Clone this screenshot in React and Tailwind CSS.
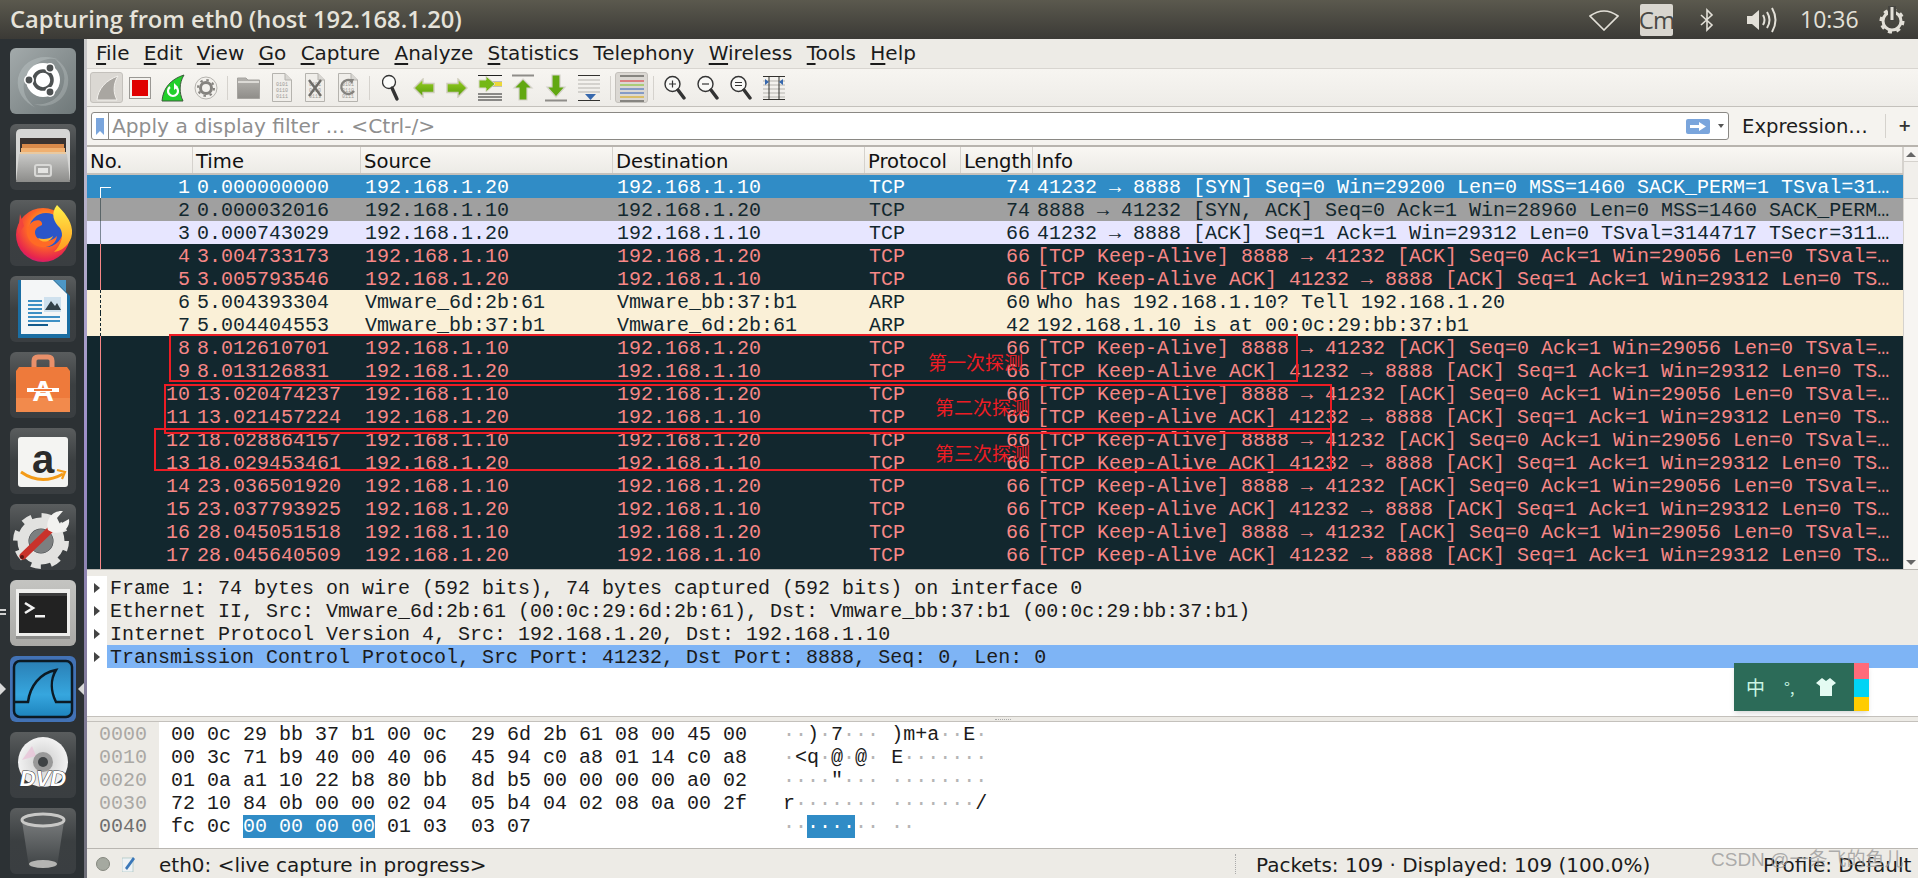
import React from 'react';

const keepA = '[TCP Keep-Alive] 8888 → 41232 [ACK] Seq=0 Ack=1 Win=29056 Len=0 TSval=…';
const keepB = '[TCP Keep-Alive ACK] 41232 → 8888 [ACK] Seq=1 Ack=1 Win=29312 Len=0 TS…';
const ip10 = '192.168.1.10';
const ip20 = '192.168.1.20';

const packets = [
  ['sel', 1, '0.000000000', ip20, ip10, 'TCP', 74, '41232 → 8888 [SYN] Seq=0 Win=29200 Len=0 MSS=1460 SACK_PERM=1 TSval=31…'],
  ['gray', 2, '0.000032016', ip10, ip20, 'TCP', 74, '8888 → 41232 [SYN, ACK] Seq=0 Ack=1 Win=28960 Len=0 MSS=1460 SACK_PERM…'],
  ['tcp', 3, '0.000743029', ip20, ip10, 'TCP', 66, '41232 → 8888 [ACK] Seq=1 Ack=1 Win=29312 Len=0 TSval=3144717 TSecr=311…'],
  ['bad', 4, '3.004733173', ip10, ip20, 'TCP', 66, keepA],
  ['bad', 5, '3.005793546', ip20, ip10, 'TCP', 66, keepB],
  ['arp', 6, '5.004393304', 'Vmware_6d:2b:61', 'Vmware_bb:37:b1', 'ARP', 60, 'Who has 192.168.1.10? Tell 192.168.1.20'],
  ['arp', 7, '5.004404553', 'Vmware_bb:37:b1', 'Vmware_6d:2b:61', 'ARP', 42, '192.168.1.10 is at 00:0c:29:bb:37:b1'],
  ['bad', 8, '8.012610701', ip10, ip20, 'TCP', 66, keepA],
  ['bad', 9, '8.013126831', ip20, ip10, 'TCP', 66, keepB],
  ['bad', 10, '13.020474237', ip10, ip20, 'TCP', 66, keepA],
  ['bad', 11, '13.021457224', ip20, ip10, 'TCP', 66, keepB],
  ['bad', 12, '18.028864157', ip10, ip20, 'TCP', 66, keepA],
  ['bad', 13, '18.029453461', ip20, ip10, 'TCP', 66, keepB],
  ['bad', 14, '23.036501920', ip10, ip20, 'TCP', 66, keepA],
  ['bad', 15, '23.037793925', ip20, ip10, 'TCP', 66, keepB],
  ['bad', 16, '28.045051518', ip10, ip20, 'TCP', 66, keepA],
  ['bad', 17, '28.045640509', ip20, ip10, 'TCP', 66, keepB],
  ['bad', 18, '33.053127344', ip10, ip20, 'TCP', 66, keepA],
];

const rowColors = {
  sel: 'bg-[#308cc6] text-white',
  gray: 'bg-[#a0a0a0] text-[#12272e]',
  tcp: 'bg-[#e7e6ff] text-[#12272e]',
  bad: 'bg-[#12272e] text-[#f78787]',
  arp: 'bg-[#faf0d7] text-[#12272e]',
};

const details = [
  'Frame 1: 74 bytes on wire (592 bits), 74 bytes captured (592 bits) on interface 0',
  'Ethernet II, Src: Vmware_6d:2b:61 (00:0c:29:6d:2b:61), Dst: Vmware_bb:37:b1 (00:0c:29:bb:37:b1)',
  'Internet Protocol Version 4, Src: 192.168.1.20, Dst: 192.168.1.10',
  'Transmission Control Protocol, Src Port: 41232, Dst Port: 8888, Seq: 0, Len: 0',
];

const hexRows = [
  ['0000', '00 0c 29 bb 37 b1 00 0c  29 6d 2b 61 08 00 45 00', '··)·7··· )m+a··E·'],
  ['0010', '00 3c 71 b9 40 00 40 06  45 94 c0 a8 01 14 c0 a8', '·<q·@·@· E·······'],
  ['0020', '01 0a a1 10 22 b8 80 bb  8d b5 00 00 00 00 a0 02', '····"··· ········'],
  ['0030', '72 10 84 0b 00 00 02 04  05 b4 04 02 08 0a 00 2f', 'r······· ·······/'],
];

const menus = [
  ['F', 'ile'], ['E', 'dit'], ['V', 'iew'], ['G', 'o'], ['C', 'apture'], ['A', 'nalyze'],
  ['S', 'tatistics'], ['', 'Telephony'], ['W', 'ireless'], ['T', 'ools'], ['H', 'elp'],
];

const columns = [
  ['No.', 'w-[106px] pl-[3px]'],
  ['Time', 'w-[168px] pl-[3px]'],
  ['Source', 'w-[252px] pl-[3px]'],
  ['Destination', 'w-[252px] pl-[3px]'],
  ['Protocol', 'w-[96px] pl-[3px]'],
  ['Length', 'w-[72px] pl-[3px]'],
  ['Info', 'flex-1 pl-[3px]'],
];

function Ascii({ text }) {
  return text.split('').map((c, i) => (
    <span key={i} className={c === '·' ? 'text-[#b5b5b5]' : ''}>{c}</span>
  ));
}

function Tile({ kind = 'dark', children }) {
  const bg = {
    dark: 'bg-gradient-to-b from-[#5a5d5e] via-[#3b3f41] to-[#3a3e41]',
    ubuntu: 'bg-gradient-to-br from-[#a3aaab] to-[#6f7879]',
    term: 'bg-gradient-to-b from-[#c4c4c1] to-[#a9a9a6]',
    shark: 'bg-[#4272b5]',
  }[kind];
  return <div className={'w-[66px] h-[66px] shrink-0 rounded-[6px] overflow-hidden flex items-center justify-center ' + bg}>{children}</div>;
}

function Launcher() {
  return (
    <div className="relative w-[84px] shrink-0 bg-[#2c3134] flex flex-col gap-[10px] pt-[9px] pl-[10px]">
      <Tile kind="ubuntu">
        <svg width="66" height="66" viewBox="0 0 66 66">
          <path d="M8 30C12 12 32 4 50 12C38 8 20 14 14 34C12 46 18 54 26 60C14 54 6 44 8 30Z" fill="#c9d0d0" opacity=".35" />
          <path d="M58 36C56 52 40 62 24 56C38 58 52 50 54 34C56 24 50 16 44 10C52 14 60 24 58 36Z" fill="#c9d0d0" opacity=".3" />
          <circle cx="33" cy="32" r="17" fill="#fff" />
          <circle cx="33" cy="32" r="9" fill="none" stroke="#4d5152" strokeWidth="3.6" />
          <circle cx="40" cy="20" r="5" fill="#fff" /><circle cx="40" cy="20" r="3.4" fill="#4d5152" />
          <circle cx="19" cy="32" r="5" fill="#fff" /><circle cx="19" cy="32" r="3.4" fill="#4d5152" />
          <circle cx="40" cy="44" r="5" fill="#fff" /><circle cx="40" cy="44" r="3.4" fill="#4d5152" />
        </svg>
      </Tile>
      <Tile>
        <svg width="66" height="66" viewBox="0 0 66 66">
          <defs>
            <linearGradient id="cab" x1="0" y1="0" x2="0" y2="1"><stop offset="0" stopColor="#c8c8c6" /><stop offset="1" stopColor="#8c8c8a" /></linearGradient>
          </defs>
          <path d="M6 10Q6 5 11 5H55Q60 5 60 10V56H6Z" fill="#d6d6d4" />
          <rect x="10" y="14" width="46" height="24" fill="#3a3330" />
          <rect x="12" y="20" width="42" height="8" fill="#d98a4a" />
          <rect x="11" y="24" width="44" height="5" fill="#f0b070" />
          <rect x="10" y="28" width="46" height="4" fill="#e9c9a0" />
          <path d="M9 30H57L60 58H6Z" fill="url(#cab)" />
          <rect x="25" y="41" width="16" height="11" rx="2" fill="#a8a8a6" stroke="#d8d8d6" strokeWidth="2" />
          <rect x="28" y="44" width="10" height="5" fill="#e4e4e2" />
        </svg>
      </Tile>
      <Tile>
        <svg width="66" height="66" viewBox="0 0 66 66">
          <defs>
            <radialGradient id="ff" cx=".55" cy=".35" r=".75"><stop offset="0" stopColor="#ffd02e" /><stop offset=".45" stopColor="#ff6a25" /><stop offset=".8" stopColor="#e6244f" /><stop offset="1" stopColor="#b8189a" /></radialGradient>
            <linearGradient id="fy" x1="0" y1="0" x2="0" y2="1"><stop offset="0" stopColor="#fff04a" /><stop offset="1" stopColor="#ff9a1f" /></linearGradient>
          </defs>
          <circle cx="33" cy="35" r="27" fill="url(#ff)" />
          <path d="M10 14L14 26L8 34Z" fill="#f2443c" />
          <circle cx="36" cy="30" r="17" fill="#2a56c8" />
          <path d="M20 24C26 18 33 20 32 25C28 27 25 28 25 33C26 42 40 44 47 36C46 46 34 50 25 45C16 40 15 30 20 24Z" fill="#ff6a25" />
          <path d="M28 38C33 40 40 39 43 36C41 42 32 44 28 38Z" fill="#ffb52e" />
          <path d="M47 5C40 14 44 22 50 28C54 34 52 44 44 52C56 50 63 40 62 30C61 20 54 12 47 5Z" fill="url(#fy)" />
        </svg>
      </Tile>
      <Tile>
        <svg width="66" height="66" viewBox="0 0 66 66">
          <path d="M8 4H44L60 20V62H8Z" fill="#1b6ea3" />
          <path d="M11 4H43L57 18V58H11Z" fill="#f4f6f7" />
          <path d="M44 4H56V16Z" fill="#4d97c6" />
          <rect x="18" y="24" width="14" height="2" fill="#3d8fc4" /><rect x="18" y="28" width="14" height="2" fill="#3d8fc4" /><rect x="18" y="32" width="14" height="2" fill="#3d8fc4" /><rect x="18" y="36" width="14" height="2" fill="#3d8fc4" />
          <rect x="34" y="21" width="17" height="15" fill="#cfe1ee" />
          <path d="M35 34L41 25L45 30L47 27L51 34Z" fill="#33424a" />
          <rect x="18" y="40" width="32" height="2" fill="#3d8fc4" /><rect x="18" y="44" width="32" height="2" fill="#3d8fc4" /><rect x="18" y="48" width="20" height="2" fill="#125a8c" />
        </svg>
      </Tile>
      <Tile>
        <svg width="66" height="66" viewBox="0 0 66 66">
          <path d="M24 20V9Q24 5 28 5H38Q42 5 42 9V20" fill="none" stroke="#e8906a" strokeWidth="5" />
          <path d="M9 15H57L60 19V60H6V19Z" fill="#ee7a3b" />
          <rect x="6" y="46" width="54" height="14" fill="#f28a4c" />
          <text x="33" y="49" textAnchor="middle" fontFamily="'Liberation Sans',sans-serif" fontWeight="700" fontSize="30" fill="#fff">A</text>
          <rect x="17" y="36" width="32" height="4" fill="#fff" />
          <rect x="24" y="37" width="18" height="2" fill="#ee7a3b" />
        </svg>
      </Tile>
      <Tile>
        <svg width="66" height="66" viewBox="0 0 66 66">
          <rect x="8" y="9" width="50" height="50" rx="3" fill="#f4f4f2" />
          <text x="33" y="45" textAnchor="middle" fontFamily="'Liberation Sans',sans-serif" fontWeight="700" fontSize="40" fill="#2b2b2b">a</text>
          <path d="M11 44Q31 58 53 46" fill="none" stroke="#f49b18" strokeWidth="3" />
          <path d="M47 42L55 44L52 51" fill="none" stroke="#f49b18" strokeWidth="2.2" />
        </svg>
      </Tile>
      <Tile>
        <svg width="66" height="66" viewBox="0 0 66 66">
          <circle cx="31" cy="37" r="18" fill="none" stroke="#e2e2e0" strokeWidth="11" />
          <circle cx="31" cy="37" r="25" fill="none" stroke="#e2e2e0" strokeWidth="6" strokeDasharray="9.6 10" />
          <circle cx="31" cy="37" r="12" fill="#7c7f80" />
          <path d="M13 52L40 26" stroke="#c9322b" strokeWidth="7" strokeLinecap="round" />
          <circle cx="12" cy="53" r="2" fill="#5a1512" />
          <path d="M38 26C35 15 43 6 53 7L47 14L50 20L59 15C61 26 48 33 38 26Z" fill="#f2f2f0" />
        </svg>
      </Tile>
      <Tile kind="term">
        <svg width="66" height="66" viewBox="0 0 66 66">
          <rect x="6" y="9" width="54" height="47" fill="#eeeeec" />
          <rect x="9" y="13" width="48" height="40" fill="#222" />
          <rect x="9" y="13" width="48" height="3" fill="#3c3c3c" />
          <rect x="6" y="56" width="54" height="3" fill="#8c8c8a" />
          <path d="M15 23L23 28L15 33" fill="none" stroke="#f2f2f2" strokeWidth="2.6" />
          <rect x="25" y="35" width="10" height="2.5" fill="#f2f2f2" />
        </svg>
      </Tile>
      <Tile kind="shark">
        <svg width="66" height="66" viewBox="0 0 66 66">
          <defs><linearGradient id="ws" x1="0" y1="0" x2="0" y2="1"><stop offset="0" stopColor="#2a7fb5" /><stop offset=".6" stopColor="#36a6de" /><stop offset="1" stopColor="#1d83bd" /></linearGradient></defs>
          <rect x="4" y="5" width="58" height="56" rx="6" fill="url(#ws)" stroke="#0c1a24" strokeWidth="2.5" />
          <path d="M4 46H18C20 30 30 17 46 14C40 24 41 36 46 46H62" fill="none" stroke="#0c1a24" strokeWidth="2.5" />
        </svg>
      </Tile>
      <Tile>
        <svg width="66" height="66" viewBox="0 0 66 66">
          <defs>
            <radialGradient id="dvd" cx=".5" cy=".5" r=".5"><stop offset="0" stopColor="#9a9a9a" /><stop offset=".3" stopColor="#d7d7d7" /><stop offset="1" stopColor="#f2f2f2" /></radialGradient>
          </defs>
          <circle cx="33" cy="30" r="25" fill="url(#dvd)" />
          <path d="M12 28L22 14L26 24Z" fill="#e8c4d8" opacity=".8" />
          <circle cx="33" cy="30" r="10" fill="#999" />
          <circle cx="33" cy="30" r="5" fill="#3e4244" />
          <text x="33" y="54" textAnchor="middle" fontFamily="'Liberation Sans',sans-serif" fontStyle="italic" fontWeight="700" fontSize="22" fill="#fff" stroke="#333" strokeWidth="1" paintOrder="stroke">DVD</text>
        </svg>
      </Tile>
      <Tile>
        <svg width="66" height="66" viewBox="0 0 66 66">
          <defs><linearGradient id="bin" x1="0" y1="0" x2="0" y2="1"><stop offset="0" stopColor="#777a7b" /><stop offset="1" stopColor="#3f4345" /></linearGradient></defs>
          <path d="M12 13L19 59H47L54 13Z" fill="url(#bin)" />
          <ellipse cx="33" cy="12" rx="21" ry="6" fill="#5a5d5e" stroke="#c8c8c6" strokeWidth="3" />
          <ellipse cx="33" cy="56" rx="14" ry="4" fill="#b4b4b2" />
        </svg>
      </Tile>
      <div className="absolute left-0 top-[570px] w-[6px] h-[2px] bg-[#d0d0d0]" />
      <div className="absolute left-0 top-[574px] w-[6px] h-[2px] bg-[#d0d0d0]" />
      <div className="absolute left-0 top-[644px] w-0 h-0 border-y-[6px] border-y-transparent border-l-[6px] border-l-[#d8d8d8]" />
      <div className="absolute right-0 top-[644px] w-0 h-0 border-y-[6px] border-y-transparent border-r-[6px] border-r-[#d8d8d8]" />
    </div>
  );
}

function Doc({ children }) {
  return (
    <svg width="20" height="29" viewBox="0 0 20 29">
      <path d="M.5 .5H13L19.5 7V28.5H.5Z" fill="#f0eeea" stroke="#b5b3ae" />
      <path d="M13 .5V7H19.5" fill="#d8d6d2" stroke="#b5b3ae" />
      <text x="10" y="13" textAnchor="middle" fontSize="5" fontFamily="'Liberation Mono',monospace" fill="#9c9a96">0101</text>
      <text x="10" y="19" textAnchor="middle" fontSize="5" fontFamily="'Liberation Mono',monospace" fill="#9c9a96">0110</text>
      <text x="10" y="25" textAnchor="middle" fontSize="5" fontFamily="'Liberation Mono',monospace" fill="#9c9a96">0111</text>
      {children}
    </svg>
  );
}

function Loupe({ sign }) {
  return (
    <svg width="22" height="26" viewBox="0 0 22 26">
      <circle cx="8.5" cy="9" r="7.5" fill="#f8f8f6" stroke="#333" strokeWidth="1.4" />
      <path d="M14 15L20 23" stroke="#333" strokeWidth="3.4" strokeLinecap="round" />
      {sign === 'plus' && <path d="M5 9H12M8.5 5.5V12.5" stroke="#333" strokeWidth="1.2" />}
      {sign === 'minus' && <path d="M5 9H12" stroke="#333" strokeWidth="1.2" />}
      {sign === 'equal' && <path d="M5 7.5H12M5 10.5H12" stroke="#333" strokeWidth="1.2" />}
    </svg>
  );
}

function Arrow({ dir }) {
  return (
    <svg width="22" height="20" viewBox="0 0 22 20">
      <defs><linearGradient id="gr" x1="0" y1="0" x2="0" y2="1"><stop offset="0" stopColor="#9ad020" /><stop offset="1" stopColor="#559a0c" /></linearGradient></defs>
      <path d={dir === 'left' ? 'M1 10L10 1V5.5H21V14.5H10V19Z' : 'M21 10L12 1V5.5H1V14.5H12V19Z'} fill="url(#gr)" stroke="#cfcdbc" strokeWidth="1.4" />
    </svg>
  );
}

function VertArrow({ up }) {
  return (
    <svg width="24" height="28" viewBox="0 0 24 28">
      {up ? (
        <g>
          <path d="M1 1.5H23" stroke="#8f8d89" strokeWidth="2" />
          <path d="M12 5L21 14H16V26H8V14H3Z" fill="#62a812" stroke="#d4d2ca" strokeWidth="1.2" />
        </g>
      ) : (
        <g>
          <path d="M1 26.5H23" stroke="#8f8d89" strokeWidth="2" />
          <path d="M12 23L21 13H16V1H8V13H3Z" fill="#62a812" stroke="#d4d2ca" strokeWidth="1.2" />
        </g>
      )}
    </svg>
  );
}

const Sep = () => (
  <div className="w-[10px] flex justify-center"><div className="w-px h-[24px] bg-[#d5d2cd]" /></div>
);

function Btn({ active, children }) {
  return (
    <div className={'w-[33px] h-[31px] flex items-center justify-center rounded-[3px] ' + (active ? 'bg-[#dbd8d3] border border-[#c4c1bc]' : '')}>
      {children}
    </div>
  );
}

function Toolbar() {
  return (
    <div className="h-[39px] flex items-center pl-[3px] border-t border-b border-t-[#d8d5d0] border-b-[#c4c1bc] bg-gradient-to-b from-[#f7f5f1] to-[#eeece8]">
      <Btn active>
        <svg width="24" height="26" viewBox="0 0 24 26"><path d="M2 25C3 14 11 5 23 1C18 9 18 18 22 25Z" fill="#a9a6a1" stroke="#f2f0ec" /></svg>
      </Btn>
      <Btn>
        <div className="w-[22px] h-[22px] border border-[#9a9894] bg-[#f4f2ee] p-[2px]"><div className="w-full h-full bg-[#e00000]" /></div>
      </Btn>
      <Btn>
        <svg width="24" height="28" viewBox="0 0 24 28">
          <path d="M1 27C2 14 10 5 23 1C18 9 18 19 22 27Z" fill="#22d02a" stroke="#3c5a3c" />
          <path d="M15 13A5 5 0 1 1 9 13" fill="none" stroke="#fff" strokeWidth="2.2" />
          <path d="M13 9L17 13L13 16Z" fill="#fff" />
        </svg>
      </Btn>
      <Btn>
        <svg width="24" height="24" viewBox="0 0 24 24">
          <circle cx="12" cy="12" r="11" fill="#f3f1ed" stroke="#b5b3ae" />
          <circle cx="12" cy="12" r="5.5" fill="none" stroke="#85837f" strokeWidth="3" />
          <circle cx="12" cy="12" r="8" fill="none" stroke="#85837f" strokeWidth="2" strokeDasharray="2.5 3.8" />
        </svg>
      </Btn>
      <Sep />
      <Btn>
        <svg width="23" height="23" viewBox="0 0 23 23">
          <defs><linearGradient id="fo" x1="0" y1="0" x2="0" y2="1"><stop offset="0" stopColor="#b5b3af" /><stop offset="1" stopColor="#8f8d89" /></linearGradient></defs>
          <path d="M.5 2H9L11 4H22.5V22.5H.5Z" fill="url(#fo)" stroke="#a5a39f" />
          <rect x="1" y="5" width="21" height="2" fill="#dcdad6" />
        </svg>
      </Btn>
      <Btn><Doc /></Btn>
      <Btn><Doc><path d="M4 7L16 23M16 7L4 23" stroke="#6e6c68" strokeWidth="2.4" /></Doc></Btn>
      <Btn><Doc><path d="M14 8A7 7 0 1 0 16 18" fill="none" stroke="#85837f" strokeWidth="2.4" /><path d="M10 6L16 6L14 11Z" fill="#85837f" /></Doc></Btn>
      <Sep />
      <Btn>
        <svg width="18" height="28" viewBox="0 0 18 28">
          <circle cx="7" cy="8" r="6.5" fill="#fcfcfa" stroke="#333" strokeWidth="1.3" />
          <path d="M10 14L15 25" stroke="#333" strokeWidth="3.4" strokeLinecap="round" />
        </svg>
      </Btn>
      <Btn><Arrow dir="left" /></Btn>
      <Btn><Arrow dir="right" /></Btn>
      <Btn>
        <svg width="24" height="28" viewBox="0 0 24 28">
          <path d="M0 1.5H24M0 26H24M0 23H24M0 20H24" stroke="#222" />
          <path d="M12 8H24M12 12H24" stroke="#8a8a8a" />
          <rect x="16" y="8" width="8" height="4" fill="#ecd83a" />
          <path d="M17 10L8 2V6H1V14H8V18Z" fill="#74b816" stroke="#d9d7c8" />
        </svg>
      </Btn>
      <Btn><VertArrow up /></Btn>
      <Btn><VertArrow /></Btn>
      <Btn>
        <svg width="24" height="28" viewBox="0 0 24 28">
          <path d="M1 1.5H23M1 26.5H23" stroke="#33322f" />
          <path d="M1 6H23M1 10H23M1 14H23M1 18H23" stroke="#b5b3ae" />
          <path d="M8 20H19L13.5 26Z" fill="#3768ad" />
        </svg>
      </Btn>
      <Sep />
      <Btn active>
        <svg width="24" height="28" viewBox="0 0 24 28">
          <path d="M0 2H24" stroke="#33322f" /><path d="M0 7H24" stroke="#d8262c" /><path d="M0 11H24" stroke="#7cc01c" />
          <path d="M0 15H24" stroke="#2f5fb8" /><path d="M0 19H24" stroke="#2f5fb8" /><path d="M0 23H24" stroke="#d8a400" /><path d="M0 27H24" stroke="#33322f" />
        </svg>
      </Btn>
      <Sep />
      <Btn><Loupe sign="plus" /></Btn>
      <Btn><Loupe sign="minus" /></Btn>
      <Btn><Loupe sign="equal" /></Btn>
      <Btn>
        <svg width="22" height="24" viewBox="0 0 22 24">
          <path d="M0 5H22M0 9H22M0 13H22M0 17H22M0 21H22" stroke="#b5b3ae" />
          <path d="M0 .5H22M0 23.5H22M6 0V24M16 0V24" stroke="#33322f" />
          <path d="M2 3L6 6L2 9ZM20 3L16 6L20 9Z" fill="#3768ad" />
        </svg>
      </Btn>
    </div>
  );
}

function FilterBar() {
  return (
    <div className="h-[38px] flex items-center pl-[4px] bg-[#f5f3ef] font-['DejaVu_Sans',sans-serif] text-[19.6px]">
      <div className="w-[1638px] h-[28px] flex items-center rounded-[3px] border border-[#8a8884] bg-white">
        <div className="w-[17px] h-full border-r border-[#8a8884] flex items-center justify-center">
          <svg width="8" height="17" viewBox="0 0 8 17"><path d="M0 0H8V17L4 13L0 17Z" fill="#7aa5dc" /></svg>
        </div>
        <span className="ml-[3px] flex-1 text-[20.2px] text-[#8f8f8f] whitespace-pre">Apply a display filter ... &lt;Ctrl-/&gt;</span>
        <svg width="24" height="15" viewBox="0 0 24 15">
          <rect width="24" height="15" rx="2" fill="#7aa5dc" />
          <path d="M4 6H13V3L20 7.5L13 12V9H4Z" fill="#fff" />
        </svg>
        <div className="ml-[8px] mr-[4px] w-0 h-0 border-x-[3px] border-x-transparent border-t-[4px] border-t-[#555]" />
      </div>
      <span className="ml-[13px] pt-[2px] w-[143px] text-[#1c1c1c] whitespace-pre">Expression…</span>
      <div className="w-px h-[24px] bg-[#d5d2cd]" />
      <span className="ml-[12px] text-[#333] text-[16px] font-bold">+</span>
    </div>
  );
}

function PacketRow({ p }) {
  const [kind, no, time, src, dst, proto, len, info] = p;
  const faint = kind === 'gray' || kind === 'tcp' ? 'opacity-50' : '';
  return (
    <div className={'flex h-[23px] leading-[25px] whitespace-pre ' + rowColors[kind]}>
      <div className="relative w-[106px] pr-[3px] text-right">
        {no === 1 ? (
          <React.Fragment>
            <span className="absolute left-[13px] top-[12px] bottom-0 border-l border-current" />
            <span className="absolute left-[13px] top-[12px] w-[11px] border-t border-current" />
          </React.Fragment>
        ) : (
          <span className={'absolute left-[13px] top-0 bottom-0 border-l border-current ' + faint + (kind === 'arp' ? ' border-dashed' : '')} />
        )}
        {no}
      </div>
      <div className="w-[168px] pl-[4px]">{time}</div>
      <div className="w-[252px] pl-[4px]">{src}</div>
      <div className="w-[252px] pl-[4px]">{dst}</div>
      <div className="w-[96px] pl-[4px]">{proto}</div>
      <div className="w-[72px] pr-[3px] text-right">{len}</div>
      <div className="flex-1 pl-[4px] overflow-hidden">{info}</div>
    </div>
  );
}

function PacketList() {
  return (
    <div className="h-[423px] flex bg-white overflow-hidden border-b border-[#b9b6b1]">
      <div className="flex-1 overflow-hidden">
        <div className="h-[28px] flex border-b-2 border-[#c4c1bc] bg-gradient-to-b from-[#f9f7f3] to-[#ecebe6] font-['DejaVu_Sans',sans-serif] text-[19.6px] leading-[30px] text-[#111]">
          {columns.map(([label, cls]) => (
            <div key={label} className={cls + ' border-r border-[#d5d2cd] whitespace-pre'}>{label}</div>
          ))}
        </div>
        <div className="font-['Liberation_Mono',monospace] text-[20px]">
          {packets.map((p) => <PacketRow key={p[1]} p={p} />)}
        </div>
      </div>
      <div className="w-[15px] flex flex-col bg-[#f7f5f2] border-l border-[#d5d2cd]">
        <div className="h-[14px] flex items-center justify-center">
          <div className="w-0 h-0 border-x-[5px] border-x-transparent border-b-[5px] border-b-[#666]" />
        </div>
        <div className="h-[38px] bg-[#f1efeb] border-y border-[#d5d2cd]" />
        <div className="flex-1" />
        <div className="h-[14px] flex items-center justify-center">
          <div className="w-0 h-0 border-x-[5px] border-x-transparent border-t-[5px] border-t-[#666]" />
        </div>
      </div>
    </div>
  );
}

function DetailPane() {
  return (
    <div className="h-[146px] pt-[6px] flex flex-col bg-[#edebe6] font-['Liberation_Mono',monospace] text-[20px] text-[#1b1b1b]">
      {details.map((d, i) => (
        <div key={i} className="flex h-[23px] leading-[25px] whitespace-pre">
          <div className="w-[20px] bg-white flex items-center justify-center">
            <div className="w-0 h-0 border-y-[5px] border-y-transparent border-l-[6px] border-l-[#444]" />
          </div>
          <div className={'flex-1 pl-[3px] ' + (i === 3 ? 'bg-[#7eb4f5]' : '')}>{d}</div>
        </div>
      ))}
      <div className="flex-1 bg-white" />
    </div>
  );
}

function HexPane() {
  return (
    <div className="h-[127px] flex bg-white font-['Liberation_Mono',monospace] text-[20px] leading-[25px] whitespace-pre text-[#1b1b1b] border-t border-[#c4c1bc]">
      <div className="w-[72px] bg-[#edebe6] pl-[12px] text-[#aaa8a4]">
        {hexRows.map((r) => <div key={r[0]} className="h-[23px]">{r[0]}</div>)}
        <div className="h-[23px] text-[#6f6f6f]">0040</div>
      </div>
      <div className="pl-[12px]">
        {hexRows.map((r) => (
          <div key={r[0]} className="h-[23px] flex">
            <div className="w-[612px]">{r[1]}</div>
            <div><Ascii text={r[2]} /></div>
          </div>
        ))}
        <div className="h-[23px] flex">
          <div className="w-[612px]">fc 0c <span className="bg-[#308cc6] text-white">00 00 00 00</span> 01 03  03 07</div>
          <div><Ascii text="··" /><span className="bg-[#308cc6] text-white">····</span><Ascii text="·· ··" /></div>
        </div>
      </div>
    </div>
  );
}

function StatusBar() {
  return (
    <div className="h-[30px] flex items-center bg-[#edebe6] border-t border-[#b9b6b1] font-['DejaVu_Sans',sans-serif] text-[20px] text-[#1b1b1b] whitespace-pre">
      <div className="ml-[9px] w-[14px] h-[14px] rounded-full bg-[#a5a9a0] border border-[#85887f]" />
      <svg className="ml-[12px]" width="14" height="16" viewBox="0 0 14 16">
        <rect x="0" y="2" width="11" height="14" fill="#eef2f4" stroke="#9bb" strokeWidth=".6" />
        <path d="M3 12L11 1L13 3L5 14Z" fill="#3a77b8" />
      </svg>
      <span className="ml-[23px] pt-[3px] w-[1076px]">eth0: &lt;live capture in progress&gt;</span>
      <div className="w-0 h-[20px] border-l border-dotted border-[#aaa]" />
      <span className="ml-[20px] pt-[3px] w-[507px]">Packets: 109 · Displayed: 109 (100.0%)</span>
      <span className="pt-[3px]">Profile: Default</span>
    </div>
  );
}

function Tray() {
  return (
    <div className="flex items-center text-[#e3e0d8]">
      <svg width="30" height="22" viewBox="0 0 30 22"><path d="M1 7Q15 -3 29 7L15 21Z" fill="none" stroke="#e3e0d8" strokeWidth="1.6" /></svg>
      <div className="ml-[21px] w-[33px] h-[32px] rounded-[2px] bg-[#d9d6cf] text-[#4a4a46] flex items-center justify-center text-[24px] tracking-[-1px] font-['Open_Sans',sans-serif]">Cm</div>
      <svg className="ml-[27px]" width="14" height="24" viewBox="0 0 14 24"><path d="M1 7L12 17L7 22V2L12 7L1 17" fill="none" stroke="#e3e0d8" strokeWidth="1.6" /></svg>
      <svg className="ml-[32px]" width="32" height="28" viewBox="0 0 32 28">
        <path d="M1 10H6L13 4V24L6 18H1Z" fill="#e3e0d8" />
        <path d="M17 9Q20 14 17 19M21 6Q26 14 21 22M26 2Q33 14 26 26" fill="none" stroke="#e3e0d8" strokeWidth="2" />
      </svg>
      <span className="ml-[22px] w-[58px] text-[23px] font-['Open_Sans',sans-serif]">10:36</span>
      <svg className="ml-[21px] mr-[13px]" width="26" height="28" viewBox="0 0 26 28">
        <circle cx="13" cy="15" r="9" fill="none" stroke="#e3e0d8" strokeWidth="3" />
        <circle cx="13" cy="15" r="11" fill="none" stroke="#e3e0d8" strokeWidth="3" strokeDasharray="4 4.6" />
        <rect x="9" y="0" width="8" height="15" fill="#45443f" />
        <path d="M13 1V14" stroke="#e3e0d8" strokeWidth="3" />
      </svg>
    </div>
  );
}

const boxes = [
  'left-[169px] top-[334px] w-[1129px] h-[48px]',
  'left-[164px] top-[384px] w-[1168px] h-[50px]',
  'left-[154px] top-[428px] w-[1178px] h-[43px]',
];

const notes = [
  ['第一次探测', 'left-[928px] top-[349px]'],
  ['第二次探测', 'left-[935px] top-[394px]'],
  ['第三次探测', 'left-[935px] top-[440px]'],
];

export default function App() {
  return (
    <div className="relative w-[1918px] h-[878px] overflow-hidden flex flex-col bg-[#2c3134]">
      <div className="h-[39px] shrink-0 flex items-center justify-between pl-[10px] bg-gradient-to-b from-[#5b594e] to-[#3b3a36]">
        <span className="text-[#e6e3da] text-[23.7px] font-semibold font-['Open_Sans',sans-serif] whitespace-pre">Capturing from eth0 (host 192.168.1.20)</span>
        <Tray />
      </div>
      <div className="flex-1 flex min-h-0">
        <Launcher />
        <div className="w-[3px] shrink-0 bg-gradient-to-b from-[#c9c9c9] via-[#9b8cc8] to-[#6f6f78]" />
        <div className="flex-1 flex flex-col min-w-0 bg-[#edebe6]">
          <div className="h-[29px] flex items-center pl-[9px] pb-[2px] gap-[14.3px] font-['DejaVu_Sans',sans-serif] text-[20px] text-[#1b1b1b]">
            {menus.map(([u, rest]) => (
              <span key={rest}>
                {u ? <span className="underline underline-offset-[3px]">{u}</span> : null}
                {rest}
              </span>
            ))}
          </div>
          <Toolbar />
          <FilterBar />
          <div className="h-[2px] bg-[#b8b4ae]" />
          <PacketList />
          <DetailPane />
          <div className="h-[5px] bg-[#edebe6] border-t border-[#c4c1bc] flex justify-center items-center">
            <div className="w-[16px] border-t border-dotted border-[#aaa]" />
          </div>
          <HexPane />
          <StatusBar />
        </div>
      </div>

      {boxes.map((b) => (
        <div key={b} className={'absolute border-[2.5px] border-[#ed1c24] ' + b} />
      ))}
      {notes.map(([t, pos]) => (
        <span key={t} className={"absolute text-[19px] leading-[26px] text-[#ed1c24] font-['Noto_Sans_CJK_SC',sans-serif] " + pos}>{t}</span>
      ))}

      <div className="absolute left-[1734px] top-[663px] w-[135px] h-[48px] flex shadow-md">
        <div className="flex-1 bg-[#2c6b58] flex items-center text-[#c9f5e4]">
          <span className="ml-[12px] w-[38px] text-[19px] font-['Noto_Sans_CJK_SC',sans-serif]">中</span>
          <span className="text-[16px] w-[32px] font-['Noto_Sans_CJK_SC',sans-serif] leading-none">°,</span>
          <svg width="20" height="18" viewBox="0 0 20 18"><path d="M6 0L10 3L14 0L20 5L16 8V18H4V8L0 5Z" fill="#e4fbf2" /></svg>
        </div>
        <div className="w-[15px] flex flex-col">
          <div className="h-[16px] bg-[#ff6b7a]" />
          <div className="h-[18px] bg-[#00d4f5]" />
          <div className="h-[14px] bg-[#ffcc00]" />
        </div>
      </div>
      <span className="absolute left-[1711px] top-[846px] text-[19px] text-[#9a9a9a]/80 font-['Liberation_Sans','Noto_Sans_CJK_SC',sans-serif] whitespace-pre">CSDN @一条飞的鱼儿</span>
    </div>
  );
}
